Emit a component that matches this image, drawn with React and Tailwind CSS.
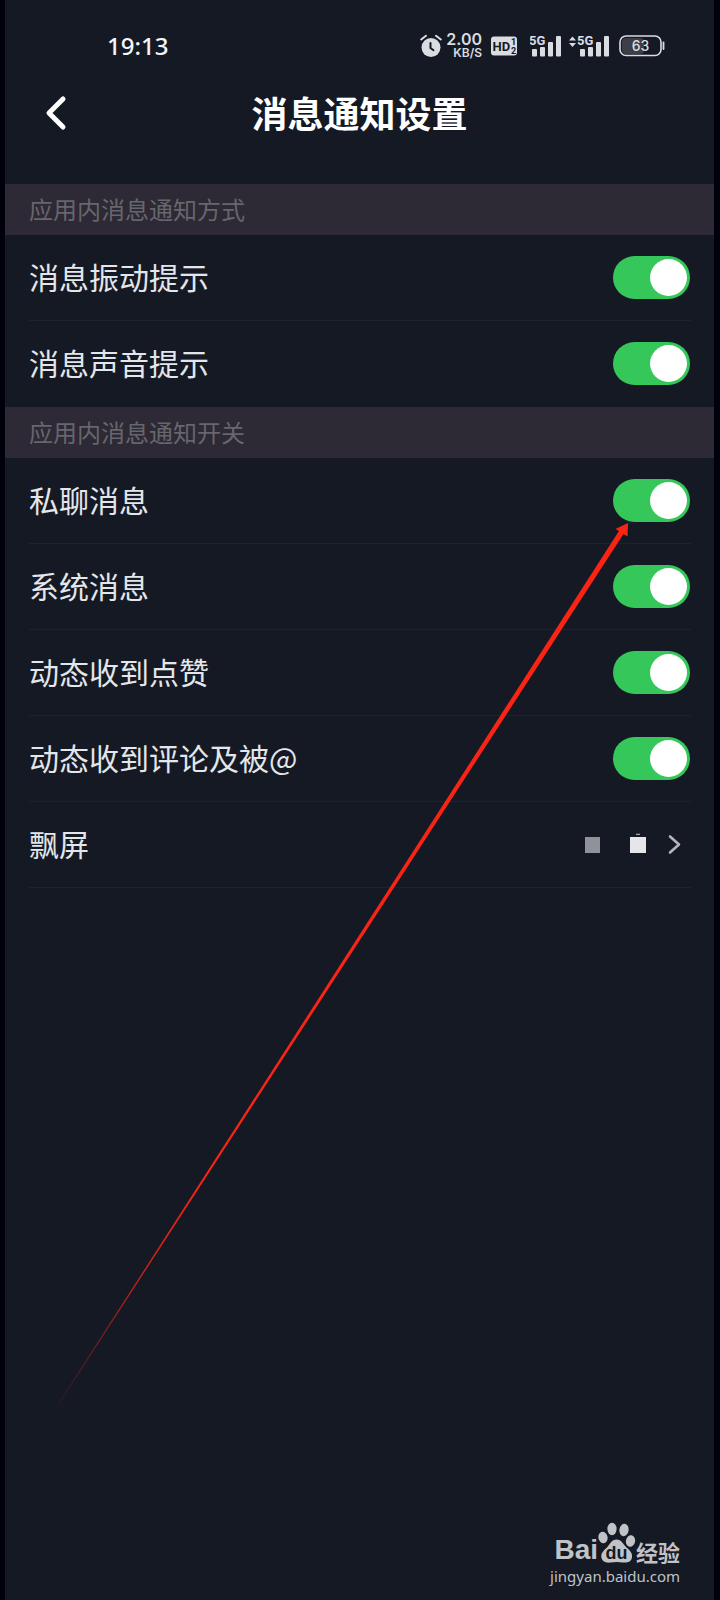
import { useState } from 'react';

const sections = [
  {
    title: '应用内消息通知方式',
    items: [
      { id: 'vibrate', label: '消息振动提示' },
      { id: 'sound', label: '消息声音提示' },
    ],
  },
  {
    title: '应用内消息通知开关',
    items: [
      { id: 'chat', label: '私聊消息' },
      { id: 'system', label: '系统消息' },
      { id: 'like', label: '动态收到点赞' },
      { id: 'comment', label: '动态收到评论及被@' },
    ],
  },
];

const SignalBars = ({ arrows }) => (
  <svg width={arrows ? 42 : 32} height="24" viewBox={arrows ? '-10 0 42 24' : '0 0 32 24'} fill="currentColor" aria-hidden="true">
    {arrows && (
      <>
        <path d="M-9 6.5 L-5.5 2.5 L-2 6.5 Z" />
        <path d="M-9 9 L-5.5 13 L-2 9 Z" />
      </>
    )}
    <text x="-1" y="11" fontSize="13" fontWeight="700" fontFamily="Roboto, sans-serif">5G</text>
    <rect x="2" y="15" width="5" height="7.5" rx="1" />
    <rect x="10" y="13" width="5" height="9.5" rx="1" />
    <rect x="18" y="8" width="5" height="14.5" rx="1" />
    <rect x="26" y="2" width="5" height="20.5" rx="1" />
  </svg>
);

const StatusBar = () => (
  <div className="h-[92px] pl-[102px] pr-12 flex items-center justify-between text-[#d9dce0]">
    <span className="font-['Noto_Sans'] font-medium text-2xl leading-6 text-[#f4f5f6]">19:13</span>
    <div className="flex items-center">
      <svg width="22" height="24" viewBox="0 0 22 24" fill="none" aria-hidden="true">
        <circle cx="11" cy="13.5" r="9.5" fill="currentColor" />
        <path d="M1.2 5.5 L6 1.8 M20.8 5.5 L16 1.8" stroke="currentColor" strokeWidth="2" strokeLinecap="round" />
        <path d="M10.5 9 V14 L13.5 16.2" stroke="#151924" strokeWidth="2" strokeLinecap="round" strokeLinejoin="round" />
      </svg>
      <div className="w-9 ml-1 flex flex-col items-end font-['Inter'] font-semibold">
        <span className="text-base leading-[14px]">2.00</span>
        <span className="text-xs leading-[14px]">KB/S</span>
      </div>
      <svg className="ml-2" width="28" height="20" viewBox="0 0 28 20" aria-hidden="true">
        <rect x="1" y="0.5" width="26" height="19" rx="3" fill="currentColor" />
        <g fill="#151924" fontFamily="Roboto, sans-serif" fontWeight="700">
          <text x="2.5" y="15" fontSize="13">HD</text>
          <text x="21" y="9" fontSize="9">1</text>
          <text x="21" y="18" fontSize="9">2</text>
        </g>
      </svg>
      <div className="ml-3 flex gap-1.5">
        <SignalBars />
        <SignalBars arrows />
      </div>
      <svg className="ml-2" width="48" height="24" viewBox="0 0 48 24" fill="none" aria-hidden="true">
        <rect x="4" y="4" width="22" height="16" rx="4" fill="#3d3f48" />
        <rect x="2" y="2" width="41" height="19.5" rx="6" stroke="currentColor" strokeWidth="1.6" />
        <path d="M45.5 8.5 V15" stroke="currentColor" strokeWidth="1.8" strokeLinecap="round" />
        <text x="22.5" y="16.5" fontSize="14" fontWeight="500" textAnchor="middle" fill="currentColor" fontFamily="Inter, sans-serif">63</text>
      </svg>
    </div>
  </div>
);

const SwitchRow = ({ item, checked, onChange }) => (
  <li className="h-[86px] flex items-center justify-between border-b border-[#1f222d] last:border-transparent pr-px">
    <label htmlFor={item.id} className="pb-1 text-3xl text-[#e3e6ea]">
      {item.label}
    </label>
    <input
      id={item.id}
      type="checkbox"
      role="switch"
      checked={checked}
      onChange={onChange}
      className="appearance-none w-[77px] h-[43px] p-[3px] rounded-full flex bg-gray-600 checked:bg-[#35c759] checked:justify-end cursor-pointer before:content-[''] before:w-[37px] before:h-[37px] before:rounded-full before:bg-white"
    />
  </li>
);

const Pointer = () => (
  <svg className="absolute top-[520px] right-[74px] pointer-events-none" width="590" height="890" viewBox="0 0 590 890" aria-hidden="true">
    <defs>
      <linearGradient id="fade" gradientUnits="userSpaceOnUse" x1="7" y1="886" x2="150" y2="664">
        <stop offset="0" stopColor="#fa2414" stopOpacity="0.1" />
        <stop offset="0.5" stopColor="#fa2414" stopOpacity="0.7" />
        <stop offset="1" stopColor="#fa2414" />
      </linearGradient>
    </defs>
    <path d="M6.7 886 L569 11 L565.5 9 L578 3 L577.5 16.5 L573.5 14 L7.3 886.4 Z" fill="url(#fade)" />
  </svg>
);

const Watermark = () => (
  <div className="absolute right-[34px] bottom-3 flex flex-col items-end text-[#bfc3c8]">
    <div className="flex items-end">
      <span className="font-['Liberation_Sans'] font-bold text-[28px] leading-7">Bai</span>
      <svg width="38" height="42" viewBox="0 0 38 42" fill="currentColor" aria-hidden="true">
        <ellipse cx="5" cy="15.5" rx="4.6" ry="5.8" transform="rotate(-10 5 15.5)" />
        <ellipse cx="14" cy="7" rx="4.6" ry="6.2" />
        <ellipse cx="26" cy="8" rx="4.6" ry="6.2" transform="rotate(8 26 8)" />
        <ellipse cx="32.5" cy="19" rx="4.6" ry="5.8" transform="rotate(10 32.5 19)" />
        <path d="M18.5 17.5 C23.5 17.5 25 22 28.5 25.5 C32 28.5 34.5 31 34 35 C33.5 40 29 41 25 40.5 C20.5 39.8 17 39.8 12.5 40.5 C8 41.2 3.5 39.5 3.3 34.5 C3.2 30.5 6 28.5 9 25.5 C12.5 21.5 13.5 17.5 18.5 17.5 Z" />
        <text x="18.5" y="37" fontSize="18" fontWeight="700" textAnchor="middle" fill="#151924" fontFamily="Liberation Sans, sans-serif">du</text>
      </svg>
      <span className="pb-px font-bold text-[22px] leading-6">经验</span>
    </div>
    <span className="font-['Noto_Sans'] text-[15px] leading-6">jingyan.baidu.com</span>
  </div>
);

export default function App() {
  const [enabled, setEnabled] = useState({
    vibrate: true,
    sound: true,
    chat: true,
    system: true,
    like: true,
    comment: true,
  });

  const toggle = (id) => setEnabled({ ...enabled, [id]: !enabled[id] });

  return (
    <div className="relative min-h-screen border-l-[5px] border-r-[6px] border-[#00000a] bg-[#151924] font-['Noto_Sans_CJK_SC',sans-serif]">
      <StatusBar />
      <header className="h-11 mb-12 px-9 grid grid-cols-[48px_1fr_48px] items-center">
        <button type="button" aria-label="返回" className="flex text-white cursor-pointer">
          <svg width="32" height="40" viewBox="0 0 32 40" fill="none" stroke="currentColor" strokeWidth="5" strokeLinecap="round" strokeLinejoin="round" aria-hidden="true">
            <path d="M22 5 L8 19 L22 33" />
          </svg>
        </button>
        <h1 className="pb-1 text-center text-4xl font-bold text-white">消息通知设置</h1>
      </header>

      <main>
        {sections.map((section) => (
          <section key={section.title}>
            <h2 className="h-[51px] pb-0.5 pl-6 flex items-center bg-[#2d2935] text-2xl text-[#67666c]">{section.title}</h2>
            <ul className="pl-6 pr-[23px]">
              {section.items.map((item) => (
                <SwitchRow key={item.id} item={item} checked={enabled[item.id]} onChange={() => toggle(item.id)} />
              ))}
            </ul>
          </section>
        ))}
        <div className="-mt-px pl-6 pr-[23px]">
          <button type="button" className="w-full h-[87px] flex items-center justify-between border-y border-[#1f222d] cursor-pointer">
            <span className="pb-1 text-3xl text-[#e3e6ea]">飘屏</span>
            <svg className="mr-2" width="100" height="24" viewBox="0 0 100 24" fill="none" aria-hidden="true">
              <rect x="2" y="4" width="15" height="16" fill="#8f9299" />
              <rect x="47" y="4" width="16" height="16" fill="#e6e6ea" />
              <path d="M53 1.3 H57" stroke="#c9cacf" />
              <path d="M87 3.5 L96 11.5 L87 19.5" stroke="#b4b6bc" strokeWidth="2.6" strokeLinecap="round" strokeLinejoin="round" />
            </svg>
          </button>
        </div>
      </main>

      <Pointer />
      <Watermark />
    </div>
  );
}
